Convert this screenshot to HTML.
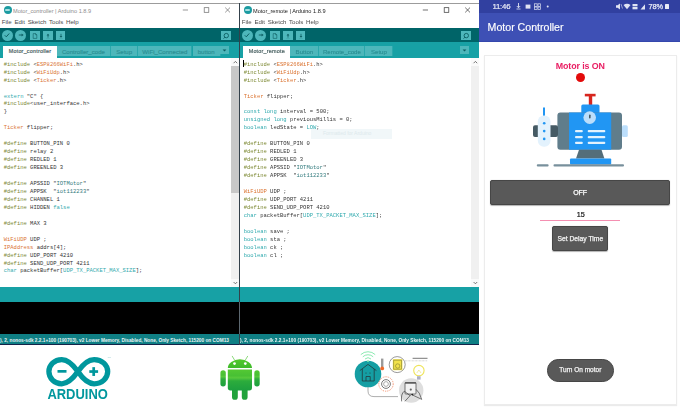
<!DOCTYPE html>
<html><head><meta charset="utf-8"><style>
*{margin:0;padding:0;box-sizing:border-box}
html,body{width:680px;height:409px;overflow:hidden;background:#fff;position:relative;font-family:"Liberation Sans",sans-serif}
.win{position:absolute;top:0;width:239px;height:345px;background:#fff;overflow:hidden}
.win::before{content:"";position:absolute;left:0;right:0;top:3px;height:1px;background:#9c9c9c}
.title{position:absolute;left:0;top:5px;height:11px;width:180px}
.ticon{position:absolute;left:3.5px;top:1px;width:8px;height:8px;border-radius:50%;background:#1b9ba1}
.ticon i{position:absolute;left:1.8px;top:2.8px;width:4.4px;height:2.4px;border-radius:1.2px;background:#a9e0e2}
.title span{position:absolute;left:13.4px;top:2.2px;font-size:6.1px;color:#8c8c8c;white-space:nowrap;transform:scaleX(0.92);transform-origin:0 0}
.wctl{position:absolute;top:5px;width:10px;height:10px}
.wmin{position:absolute;left:2px;top:5px;width:5px;height:1px;background:#555}
.wmax{position:absolute;left:1.5px;top:2px;width:5px;height:5px;border:0.8px solid #555}
.wx{position:absolute;left:1px;top:0;font-size:7px;line-height:10px;color:#555}
.menu{position:absolute;left:1.8px;top:17.5px;font-size:6.1px;color:#4a4a4a;white-space:nowrap;word-spacing:-0.3px}
.toolbar{position:absolute;left:0;top:27.5px;width:239px;height:14.5px;background:#006468}
.tb{position:absolute;background:#4DB7BB}
.tb.c{width:11.4px;height:11.4px;border-radius:50%;top:2px}
.tb.c svg{position:absolute;left:-0.3px;top:-0.3px}
.tb.s{width:9.8px;height:9.4px;top:3.1px}
.tb.s svg{position:absolute;left:0;top:0}
.tabbar{position:absolute;left:0;top:42px;width:239px;height:15.7px;background:#17A1A5}
.tab{position:absolute;top:3.5px;height:10.5px;background:#4DB7BB;border-right:1px solid #2aa8ac;font-size:6.1px;line-height:11px;text-align:center;color:#2b9094;-webkit-text-stroke:0.15px #2b9094;white-space:nowrap;overflow:hidden}
.tab.act{height:12.2px;background:#fff;color:#4f6667;border-right:none;-webkit-text-stroke:0.2px #4f6667;letter-spacing:0.2px;font-size:5.45px;line-height:11.2px}
.dd{position:absolute;top:3.5px;width:9px;height:8.6px;background:#4DB7BB}
.dd svg{position:absolute;left:0;top:0}
.code{position:absolute;left:3.7px;top:60.7px;font-family:"Liberation Mono",monospace;font-size:5.5px;line-height:7.96px;color:#000;opacity:0.82;}
.ln{white-space:pre}
.ln{height:7.96px}
.tip{position:absolute;left:71px;top:129px;width:81px;height:9.5px;background:#f1f7f9;color:#dde9ec;font-size:5px;line-height:9.5px;padding-left:12px}
.sb{position:absolute;left:230.5px;top:57.7px;width:8.5px;height:228.9px;background:#f0f0f0}
.sbup,.sbdn{position:absolute;left:0;width:8.5px;height:8px;background:#fafafa}
.sbup svg,.sbdn svg{position:absolute;left:0;top:0}
.sbup{top:0}
.sbdn{bottom:0}
.thumb{position:absolute;left:0.5px;top:8.5px;width:7.5px;height:127px;background:#c8c8c8}
.tealbar{position:absolute;left:0;top:286.6px;width:239px;height:15.7px;background:#17A1A5}
.console{position:absolute;left:0;top:302.3px;width:239px;height:32px;background:#000}
.status{position:absolute;left:0;top:334.2px;width:239px;height:9.6px;background:#0f7f84;color:#e8f4f4;font-size:4.75px;font-weight:bold;line-height:13.8px;white-space:nowrap;overflow:hidden;padding-left:0}
.botline{position:absolute;left:0;top:343.8px;width:239px;height:1.3px;background:#15234a}
.divider{position:absolute;left:239px;top:3px;width:1px;height:342px;background:#34414b}

#root{position:absolute;left:0;top:0;width:680px;height:409px;overflow:hidden;filter:blur(0.35px)}
.active .title span{color:#202020}
.active .wc path,.active .wc rect{stroke:#333}
.caret{position:absolute;left:3.2px;top:59.8px;width:0.9px;height:7px;background:#000}

</style></head><body><div id="root">

<div class="win" style="left:0px">
  <div class="title"><div class="ticon"><i></i></div><span>Motor_controller | Arduino 1.8.9</span></div>
  <svg class="wc" width="60" height="12" viewBox="0 0 60 12" style="position:absolute;left:180px;top:4px">
    <path d="M2.8 6 H8" stroke="#6a6a6a" stroke-width="0.7"/>
    <rect x="24.2" y="3.7" width="4.6" height="4.6" fill="none" stroke="#6a6a6a" stroke-width="0.7"/>
    <path d="M45.2 3.6 L50 8.4 M50 3.6 L45.2 8.4" stroke="#6a6a6a" stroke-width="0.7"/>
  </svg>
  <div class="menu">File&nbsp; Edit&nbsp; Sketch&nbsp; Tools&nbsp; Help</div>
  <div class="toolbar">
    <div class="tb c" style="left:1.5px"><svg width="12" height="12" viewBox="0 0 12 12"><path d="M3.8 6.3 L5.3 7.8 L8.2 4.5" fill="none" stroke="#0d5e62" stroke-width="1"/></svg></div>
    <div class="tb c" style="left:14.9px"><svg width="12" height="12" viewBox="0 0 12 12"><path d="M3.8 6 H7.2" fill="none" stroke="#0d5e62" stroke-width="0.9"/><path d="M6.6 4.4 L8.6 6 L6.6 7.6 Z" fill="#0d5e62"/></svg></div>
    <div class="tb s" style="left:30.4px"><svg width="10" height="10" viewBox="0 0 10 10"><path d="M3.2 2.6 H5.6 L6.8 3.8 V7.4 H3.2 Z M5.6 2.6 V3.8 H6.8" fill="none" stroke="#0d5e62" stroke-width="0.6"/></svg></div>
    <div class="tb s" style="left:42.8px"><svg width="10" height="10" viewBox="0 0 10 10"><path d="M5 6.6 V3.4" stroke="#0d5e62" stroke-width="0.8"/><path d="M3.6 4.6 L5 2.8 L6.4 4.6 Z" fill="#0d5e62"/><path d="M3.2 7.6 H6.8" stroke="#3a9da1" stroke-width="0.5"/></svg></div>
    <div class="tb s" style="left:55.6px"><svg width="10" height="10" viewBox="0 0 10 10"><path d="M5 2.8 V5.6" stroke="#0d5e62" stroke-width="0.8"/><path d="M3.6 5 L5 6.8 L6.4 5 Z" fill="#0d5e62"/><path d="M3.2 7.6 H6.8" stroke="#3a9da1" stroke-width="0.5"/></svg></div>
    <div class="tb s" style="left:221px;top:3.2px"><svg width="10" height="10" viewBox="0 0 10 10"><circle cx="5.3" cy="4.6" r="2.2" fill="none" stroke="#0a5d61" stroke-width="0.9"/><path d="M3.8 6.2 L2.6 7.6" stroke="#0a5d61" stroke-width="0.9"/></svg></div>
  </div>
  <div class="tabbar">
  <div class="tab act" style="left:3.2px;width:53.6px">Motor_controller</div>
<div class="tab" style="left:56.800000000000004px;width:54.3px">Controller_code</div>
<div class="tab" style="left:111.1px;width:27.2px">Setup</div>
<div class="tab" style="left:138.29999999999998px;width:54.2px">WiFi_Connected</div>
<div class="tab" style="left:192.5px;width:28.3px">button</div>
  <div class="dd" style="left:219.5px"><svg width="9" height="9" viewBox="0 0 9 9"><path d="M2.6 3.5 H6.4 L4.5 5.6 Z" fill="#0a5d61"/></svg></div>
  </div>
  
  <div class="code"><div class="ln"><span style="color:#5E6D03">#include</span> &lt;<span style="color:#D35400">ESP8266WiFi</span>.h&gt;</div><div class="ln"><span style="color:#5E6D03">#include</span> &lt;<span style="color:#D35400">WiFiUdp</span>.h&gt;</div><div class="ln"><span style="color:#5E6D03">#include</span> &lt;<span style="color:#D35400">Ticker</span>.h&gt;</div><div class="ln"></div><div class="ln"><span style="color:#00979C">extern</span> &quot;C&quot; {</div><div class="ln"><span style="color:#5E6D03">#include</span>&lt;user_interface.h&gt;</div><div class="ln">}</div><div class="ln"></div><div class="ln"><span style="color:#D35400">Ticker</span> flipper;</div><div class="ln"></div><div class="ln"><span style="color:#5E6D03">#define</span> BUTTON_PIN 0</div><div class="ln"><span style="color:#5E6D03">#define</span> relay 2</div><div class="ln"><span style="color:#5E6D03">#define</span> REDLED 1</div><div class="ln"><span style="color:#5E6D03">#define</span> GREENLED 3</div><div class="ln"></div><div class="ln"><span style="color:#5E6D03">#define</span> APSSID &quot;<span style="color:#005C5F">IOTMotor</span>&quot;</div><div class="ln"><span style="color:#5E6D03">#define</span> APPSK  &quot;<span style="color:#005C5F">iot112233</span>&quot;</div><div class="ln"><span style="color:#5E6D03">#define</span> CHANNEL 1</div><div class="ln"><span style="color:#5E6D03">#define</span> HIDDEN <span style="color:#00979C">false</span></div><div class="ln"></div><div class="ln"><span style="color:#5E6D03">#define</span> MAX 3</div><div class="ln"></div><div class="ln"><span style="color:#D35400">WiFiUDP</span> UDP ;</div><div class="ln"><span style="color:#D35400">IPAddress</span> addrs[4];</div><div class="ln"><span style="color:#5E6D03">#define</span> UDP_PORT 4210</div><div class="ln"><span style="color:#5E6D03">#define</span> SEND_UDP_PORT 4211</div><div class="ln"><span style="color:#00979C">char</span> packetBuffer[<span style="color:#00979C">UDP_TX_PACKET_MAX_SIZE</span>];</div><div class="ln"></div><div class="ln"> </div></div>
  
  <div class="sb"><div class="sbup"><svg width="9" height="8" viewBox="0 0 9 8"><path d="M2.6 5.2 L4.4 3.4 L6.2 5.2" fill="none" stroke="#555" stroke-width="0.8"/></svg></div><div class="thumb"></div><div class="sbdn"><svg width="9" height="8" viewBox="0 0 9 8"><path d="M2.6 3 L4.4 4.8 L6.2 3" fill="none" stroke="#555" stroke-width="0.8"/></svg></div></div>
  <div class="tealbar"></div>
  <div class="console"></div>
  <div class="status">), 2, nonos-sdk 2.2.1+100 (190703), v2 Lower Memory, Disabled, None, Only Sketch, 115200 on COM13</div>
  <div class="botline"></div>
</div>

<div class="win active" style="left:240px">
  <div class="title"><div class="ticon"><i></i></div><span>Motor_remote | Arduino 1.8.9</span></div>
  <svg class="wc" width="60" height="12" viewBox="0 0 60 12" style="position:absolute;left:180px;top:4px">
    <path d="M2.8 6 H8" stroke="#6a6a6a" stroke-width="0.7"/>
    <rect x="24.2" y="3.7" width="4.6" height="4.6" fill="none" stroke="#6a6a6a" stroke-width="0.7"/>
    <path d="M45.2 3.6 L50 8.4 M50 3.6 L45.2 8.4" stroke="#6a6a6a" stroke-width="0.7"/>
  </svg>
  <div class="menu">File&nbsp; Edit&nbsp; Sketch&nbsp; Tools&nbsp; Help</div>
  <div class="toolbar">
    <div class="tb c" style="left:1.5px"><svg width="12" height="12" viewBox="0 0 12 12"><path d="M3.8 6.3 L5.3 7.8 L8.2 4.5" fill="none" stroke="#0d5e62" stroke-width="1"/></svg></div>
    <div class="tb c" style="left:14.9px"><svg width="12" height="12" viewBox="0 0 12 12"><path d="M3.8 6 H7.2" fill="none" stroke="#0d5e62" stroke-width="0.9"/><path d="M6.6 4.4 L8.6 6 L6.6 7.6 Z" fill="#0d5e62"/></svg></div>
    <div class="tb s" style="left:30.4px"><svg width="10" height="10" viewBox="0 0 10 10"><path d="M3.2 2.6 H5.6 L6.8 3.8 V7.4 H3.2 Z M5.6 2.6 V3.8 H6.8" fill="none" stroke="#0d5e62" stroke-width="0.6"/></svg></div>
    <div class="tb s" style="left:42.8px"><svg width="10" height="10" viewBox="0 0 10 10"><path d="M5 6.6 V3.4" stroke="#0d5e62" stroke-width="0.8"/><path d="M3.6 4.6 L5 2.8 L6.4 4.6 Z" fill="#0d5e62"/><path d="M3.2 7.6 H6.8" stroke="#3a9da1" stroke-width="0.5"/></svg></div>
    <div class="tb s" style="left:55.6px"><svg width="10" height="10" viewBox="0 0 10 10"><path d="M5 2.8 V5.6" stroke="#0d5e62" stroke-width="0.8"/><path d="M3.6 5 L5 6.8 L6.4 5 Z" fill="#0d5e62"/><path d="M3.2 7.6 H6.8" stroke="#3a9da1" stroke-width="0.5"/></svg></div>
    <div class="tb s" style="left:221px;top:3.2px"><svg width="10" height="10" viewBox="0 0 10 10"><circle cx="5.3" cy="4.6" r="2.2" fill="none" stroke="#0a5d61" stroke-width="0.9"/><path d="M3.8 6.2 L2.6 7.6" stroke="#0a5d61" stroke-width="0.9"/></svg></div>
  </div>
  <div class="tabbar">
  <div class="tab act" style="left:3.2px;width:47.2px">Motor_remote</div>
<div class="tab" style="left:50.400000000000006px;width:29px">Button</div>
<div class="tab" style="left:79.4px;width:46px">Remote_code</div>
<div class="tab" style="left:125.4px;width:28px">Setup</div>
  <div class="dd" style="left:219.5px"><svg width="9" height="9" viewBox="0 0 9 9"><path d="M2.6 3.5 H6.4 L4.5 5.6 Z" fill="#0a5d61"/></svg></div>
  </div>
  <div class="tip">Formatted for Arduino</div>
  <div class="code"><div class="ln"><span style="color:#5E6D03">#include</span> &lt;<span style="color:#D35400">ESP8266WiFi</span>.h&gt;</div><div class="ln"><span style="color:#5E6D03">#include</span> &lt;<span style="color:#D35400">WiFiUdp</span>.h&gt;</div><div class="ln"><span style="color:#5E6D03">#include</span> &lt;<span style="color:#D35400">Ticker</span>.h&gt;</div><div class="ln"></div><div class="ln"><span style="color:#D35400">Ticker</span> flipper;</div><div class="ln"></div><div class="ln"><span style="color:#00979C">const</span> <span style="color:#00979C">long</span> interval = 500;</div><div class="ln"><span style="color:#00979C">unsigned</span> <span style="color:#00979C">long</span> previousMillis = 0;</div><div class="ln"><span style="color:#00979C">boolean</span> ledState = <span style="color:#00979C">LOW</span>;</div><div class="ln"></div><div class="ln"><span style="color:#5E6D03">#define</span> BUTTON_PIN 0</div><div class="ln"><span style="color:#5E6D03">#define</span> REDLED 1</div><div class="ln"><span style="color:#5E6D03">#define</span> GREENLED 3</div><div class="ln"><span style="color:#5E6D03">#define</span> APSSID &quot;<span style="color:#005C5F">IOTMotor</span>&quot;</div><div class="ln"><span style="color:#5E6D03">#define</span> APPSK  &quot;<span style="color:#005C5F">iot112233</span>&quot;</div><div class="ln"></div><div class="ln"><span style="color:#D35400">WiFiUDP</span> UDP ;</div><div class="ln"><span style="color:#5E6D03">#define</span> UDP_PORT 4211</div><div class="ln"><span style="color:#5E6D03">#define</span> SEND_UDP_PORT 4210</div><div class="ln"><span style="color:#00979C">char</span> packetBuffer[<span style="color:#00979C">UDP_TX_PACKET_MAX_SIZE</span>];</div><div class="ln"></div><div class="ln"><span style="color:#00979C">boolean</span> save ;</div><div class="ln"><span style="color:#00979C">boolean</span> sta ;</div><div class="ln"><span style="color:#00979C">boolean</span> ck ;</div><div class="ln"><span style="color:#00979C">boolean</span> cl ;</div></div>
  <div class="caret"></div>
  <div class="sb"><div class="sbup"><svg width="9" height="8" viewBox="0 0 9 8"><path d="M2.6 5.2 L4.4 3.4 L6.2 5.2" fill="none" stroke="#555" stroke-width="0.8"/></svg></div><div class="sbdn"><svg width="9" height="8" viewBox="0 0 9 8"><path d="M2.6 3 L4.4 4.8 L6.2 3" fill="none" stroke="#555" stroke-width="0.8"/></svg></div></div>
  <div class="tealbar"></div>
  <div class="console"></div>
  <div class="status">), 2, nonos-sdk 2.2.1+100 (190703), v2 Lower Memory, Disabled, None, Only Sketch, 115200 on COM13</div>
  <div class="botline"></div>
</div>
<div class="divider"></div><div class="divider" style="top:302.3px;height:32px;background:#5d6870"></div>
<div id="phone" style="position:absolute;left:479px;top:0;width:201px;height:409px;background:#fff;overflow:hidden">
  <div style="position:absolute;left:0;top:0;width:201px;height:12.6px;background:#3140a0"></div>
  <div style="position:absolute;left:0;top:12.6px;width:201px;height:29px;background:#3E50B5;box-shadow:inset 0 -0.8px 0 #3344aa"></div>
  <div style="position:absolute;left:13.4px;top:1.8px;font-size:7.8px;color:#e8eaf6;line-height:9px;letter-spacing:-0.2px;-webkit-text-stroke:0.2px #e8eaf6">11:46</div>
  <svg style="position:absolute;left:35px;top:2px" width="40" height="9" viewBox="0 0 40 9">
    <g fill="#dfe3f3" stroke="#dfe3f3">
      <path d="M4.5 1 V5.5 M2.8 4 L4.5 5.8 L6.2 4" fill="none" stroke-width="0.9"/>
      <rect x="2.5" y="6.6" width="4" height="0.8" stroke="none"/>
      <rect x="11.6" y="2.6" width="4.8" height="4" stroke="none"/>
      <rect x="20.5" y="1.8" width="2.6" height="2.6" fill="none" stroke-width="0.7"/>
      <rect x="24" y="1.8" width="2.6" height="2.6" fill="none" stroke-width="0.7"/>
      <rect x="20.5" y="5" width="2.6" height="2.6" fill="none" stroke-width="0.7"/>
      <rect x="24" y="5" width="2.6" height="2.6" fill="none" stroke-width="0.7"/>
      <circle cx="33.7" cy="4.6" r="1" stroke="none"/>
    </g>
  </svg>
  <svg style="position:absolute;left:133.5px;top:2px" width="38" height="9" viewBox="0 0 38 9">
    <g fill="#dfe3f3">
      <path d="M3 3.2 H4.6 L7 1.5 V7.5 L4.6 5.8 H3 Z"/>
      <path d="M8 2 L9.5 6.5" stroke="#dfe3f3" stroke-width="0.6"/>
      <path d="M10.5 3 Q14 0.5 17.5 3 L14 7.2 Z"/>
      <rect x="19.5" y="2" width="5" height="2.3"/>
      <rect x="19.5" y="5" width="5" height="2.3"/>
      <path d="M27.5 7.5 L32 2.3 V7.5 Z"/>
    </g>
  </svg>
  <div style="position:absolute;left:169.6px;top:1.8px;font-size:7.4px;color:#e8eaf6;line-height:9px;letter-spacing:-0.1px;-webkit-text-stroke:0.25px #e8eaf6">78%</div>
  <div style="position:absolute;left:186px;top:4px;width:3.6px;height:5px;background:#e8eaf6;border-radius:0.5px"></div>
  <div style="position:absolute;left:8.6px;top:20.8px;font-size:10.6px;color:#fff;line-height:13px;-webkit-text-stroke:0.15px #fff">Motor Controller</div>
  <div style="position:absolute;left:4.6px;top:55.4px;width:193px;height:350px;border:1px solid #ececec;box-shadow:0 1px 1px rgba(0,0,0,0.08)"></div>
  <div style="position:absolute;left:76.7px;top:61.2px;font-size:8.9px;font-weight:bold;color:#E91E63;line-height:11px;letter-spacing:-0.1px">Motor is ON</div>
  <div style="position:absolute;left:96.6px;top:72.7px;width:9.4px;height:9.4px;border-radius:50%;background:#E30B0B"></div>
  <!-- motor illustration: coords relative to phone (subtract 479) -->
  <svg style="position:absolute;left:51px;top:90px" width="100" height="80" viewBox="530 90 100 80">
    <rect x="584.8" y="93.8" width="10.8" height="2.6" fill="#D7261E"/>
    <rect x="588.8" y="95.5" width="3.4" height="9.5" fill="#D7261E"/>
    <rect x="581.3" y="104.5" width="18.2" height="9" rx="1.5" fill="#2196F3"/>
    <rect x="557.4" y="112.5" width="64.6" height="37.2" rx="3" fill="#607D8B"/>
    <rect x="569" y="112.5" width="42.2" height="37.2" fill="#2196F3"/>
    <rect x="533" y="125.2" width="25" height="11.8" rx="2" fill="#455A64"/>
    <rect x="622" y="125.2" width="5.8" height="11.8" rx="1.5" fill="#BBDEFB"/>
    <rect x="543" y="107.5" width="2" height="9" fill="#2196F3"/>
    <rect x="537.8" y="115.4" width="12.7" height="31.4" rx="6" fill="#E3F2FD"/>
    <circle cx="544.2" cy="123.3" r="1.3" fill="#2196F3"/>
    <circle cx="544.2" cy="131.1" r="1.3" fill="#2196F3"/>
    <circle cx="544.2" cy="138.9" r="1.3" fill="#2196F3"/>
    <circle cx="589.7" cy="117.6" r="6.3" fill="#BBDEFB"/>
    <rect x="589" y="114.5" width="1.6" height="4" rx="0.8" fill="#455A64"/>
    <g fill="#E3F2FD">
      <rect x="575" y="130" width="7.8" height="2.2" rx="1"/>
      <rect x="575" y="136" width="7.8" height="2.2" rx="1"/>
      <rect x="575" y="141.8" width="7.8" height="2.2" rx="1"/>
      <rect x="587.7" y="130" width="17.6" height="2.2" rx="1"/>
      <rect x="587.7" y="136" width="17.6" height="2.2" rx="1"/>
      <rect x="587.7" y="141.8" width="17.6" height="2.2" rx="1"/>
    </g>
    <path d="M579 149.7 H601.5 L604.4 158.6 H576 Z" fill="#546E7A"/>
    <rect x="570" y="158.5" width="41.2" height="6" rx="1" fill="#2196F3"/>
    <rect x="536.8" y="164.3" width="11.8" height="2.2" rx="1" fill="#78909C"/>
    <rect x="553.5" y="164.3" width="70.5" height="2.2" rx="1" fill="#78909C"/>
  </svg>
  <div style="position:absolute;left:11.2px;top:179.5px;width:179.9px;height:25.1px;background:#595959;border:0.8px solid #464646;border-radius:2px;box-shadow:0 0.6px 1px rgba(0,0,0,0.3);color:#fff;font-size:7px;-webkit-text-stroke:0.25px #fff;line-height:23.5px;text-align:center">OFF</div>
  <div style="position:absolute;left:61.3px;top:210px;width:80px;text-align:center;font-size:7.2px;color:#111;line-height:9px;padding-left:1px;-webkit-text-stroke:0.2px #111">15</div>
  <div style="position:absolute;left:61.3px;top:219.8px;width:80px;height:1px;background:#F48FB1"></div>
  <div style="position:absolute;left:73.3px;top:226px;width:56px;height:24.7px;background:#595959;border:0.8px solid #464646;border-radius:2px;box-shadow:0 0.6px 1px rgba(0,0,0,0.3);color:#f2f2f2;font-size:6.75px;-webkit-text-stroke:0.25px #f2f2f2;line-height:24.8px;text-align:center;white-space:nowrap">Set Delay Time</div>
  <div style="position:absolute;left:67.5px;top:359.4px;width:67.6px;height:22.4px;background:#595959;border:0.8px solid #464646;border-radius:11.2px;color:#f2f2f2;font-size:6.5px;-webkit-text-stroke:0.25px #f2f2f2;line-height:19px;text-align:center;white-space:nowrap">Turn On motor</div>
</div>

<svg style="position:absolute;left:0;top:345px" width="480" height="64" viewBox="0 345 480 64">
  <defs>
    <linearGradient id="ag" x1="0" y1="0" x2="0" y2="1">
      <stop offset="0" stop-color="#54c833"/>
      <stop offset="0.3" stop-color="#48c034"/>
      <stop offset="0.4" stop-color="#58c93c"/>
      <stop offset="0.55" stop-color="#2cac3c"/>
      <stop offset="1" stop-color="#1d9f3f"/>
    </linearGradient>
    <linearGradient id="ah" x1="0" y1="0" x2="0" y2="1">
      <stop offset="0" stop-color="#52c82c"/>
      <stop offset="1" stop-color="#3dba2a"/>
    </linearGradient>
  </defs>
  <!-- Arduino -->
  <g fill="none" stroke="#00979D" stroke-width="5.3" transform="translate(0.3,0.6)">
    <path d="M77.6,371 C72,363 67,359 61.5,359 C54,359 48.6,364.5 48.6,371 C48.6,377.5 54,383.2 61.5,383.2 C67,383.2 72,379 77.6,371 Z"/>
    <path d="M77.6,371 C83,363 88,359 93.8,359 C101.8,359 107.4,364.5 107.4,371 C107.4,377.5 101.8,383.2 93.8,383.2 C88,383.2 83,379 77.6,371 Z"/>
  </g>
  <g fill="#00979D">
    <rect x="57.5" y="370" width="9" height="2.7"/>
    <rect x="89.3" y="370.2" width="8.8" height="2.7"/>
    <rect x="92.35" y="367.15" width="2.7" height="8.8"/>
    <text x="47.4" y="399" font-family="Liberation Sans" font-weight="bold" font-size="13.8" textLength="60.5" lengthAdjust="spacingAndGlyphs">ARDUINO</text>
  </g>
  <text x="107.5" y="358" font-family="Liberation Sans" font-size="2.5" fill="#9ccfd1">TM</text>
  <!-- Android -->
  <g stroke="#6fd15a" stroke-width="0.8" stroke-linecap="round">
    <line x1="232.3" y1="356.3" x2="234.4" y2="359.8"/>
    <line x1="247.6" y1="356.3" x2="245.5" y2="359.8"/>
  </g>
  <path d="M227.8,368.1 A12.1,8.8 0 0 1 252,368.1 Z" fill="url(#ah)"/>
  <circle cx="234.5" cy="363.6" r="1.35" fill="#fff"/>
  <circle cx="245.3" cy="363.6" r="1.35" fill="#fff"/>
  <rect x="232" y="386" width="5.8" height="13.8" rx="2.9" fill="#22a33c"/>
  <rect x="241.8" y="386" width="5.8" height="13.8" rx="2.9" fill="#22a33c"/>
  <path d="M227.8,369.4 H252 V387.8 Q252,390.4 249.4,390.4 H230.4 Q227.8,390.4 227.8,387.8 Z" fill="url(#ag)"/>
  <rect x="220.4" y="370.2" width="5.4" height="16.2" rx="2.7" fill="url(#ag)"/>
  <rect x="254.3" y="370.2" width="5.4" height="16.2" rx="2.7" fill="url(#ag)"/>
  <!-- IoT illustration -->
  <circle cx="411.2" cy="390.5" r="12.2" fill="#dedede"/>
  <path d="M368,387 V391 Q368,396.6 374,396.6 H398" fill="none" stroke="#777" stroke-width="0.6"/>
  <circle cx="368" cy="374" r="13.3" fill="#159EA3"/>
  <g fill="none" stroke="#7ee6a8" stroke-width="0.9">
    <path d="M365,359 A4.5,4.5 0 0 1 371,359"/>
    <path d="M362.8,356.8 A7.6,7.6 0 0 1 373.2,356.8"/>
    <path d="M360.8,354.6 A10.5,10.5 0 0 1 375.2,354.6"/>
  </g>
  <circle cx="368" cy="361.2" r="0.9" fill="#7ee6a8"/>
  <g fill="none" stroke="#23393c" stroke-width="0.8">
    <path d="M359.8,370.6 L368,364.4 L376.4,370.6"/>
    <path d="M362.3,369 V381 H374.2 V369"/>
    <path d="M366,381 V376.5 H370.2 V381"/>
  </g>
  <circle cx="366" cy="373" r="0.6" fill="#23393c"/>
  <circle cx="370" cy="373" r="0.6" fill="#23393c"/>
  <rect x="381" y="358.6" width="2.4" height="9" fill="#9a9a9a"/>
  <circle cx="382.2" cy="368.4" r="1.9" fill="#f06a2a"/>
  <circle cx="397.2" cy="364.6" r="8" fill="#fff" stroke="#555" stroke-width="0.6"/>
  <rect x="392.8" y="359.2" width="9.6" height="11" fill="#f2e24a"/>
  <rect x="393.8" y="360.1" width="7.8" height="9" fill="none" stroke="#6a6a30" stroke-width="0.5"/>
  <circle cx="397.7" cy="366" r="2.2" fill="none" stroke="#6a6a30" stroke-width="0.5"/>
  <path d="M412.6,358.3 H427.5" stroke="#555" stroke-width="0.8"/>
  <path d="M405,360.8 H427.5" stroke="#999" stroke-width="0.5" stroke-dasharray="0.8,0.6"/>
  <circle cx="418.9" cy="370.6" r="5.2" fill="#fff" stroke="#eee45a" stroke-width="1.1"/>
  <path d="M416.8,373 L418.9,370 L421,373" fill="none" stroke="#e5d84a" stroke-width="0.5"/>
  <rect x="417" y="376.2" width="3.6" height="3.4" fill="#aeb0c4"/>
  <circle cx="386" cy="384" r="7.2" fill="none" stroke="#f07a50" stroke-width="0.9" stroke-dasharray="0.9,1"/>
  <circle cx="386" cy="384" r="4.4" fill="none" stroke="#555" stroke-width="0.8"/>
  <circle cx="386" cy="384" r="2.4" fill="none" stroke="#777" stroke-width="0.6"/>
  <rect x="405" y="382.5" width="11" height="11.5" rx="0.8" fill="#f2f2f2" stroke="#333" stroke-width="0.65"/>
  <rect x="405" y="382.3" width="11" height="1.4" fill="#555"/>
  <circle cx="410.8" cy="389.6" r="1.1" fill="#666"/>
  <g fill="none" stroke="#333" stroke-width="0.65" stroke-linecap="round">
    <path d="M401.6,401 Q400.6,394 404.3,391.2 L409.8,395.4"/>
    <path d="M405.2,401 L411.2,394.4 L421.4,399.2"/>
    <path d="M421.6,399 Q419.6,392 416.4,389.6"/>
  </g>
  <circle cx="412.4" cy="394.6" r="0.8" fill="#222"/>
</svg>

</div></body></html>
